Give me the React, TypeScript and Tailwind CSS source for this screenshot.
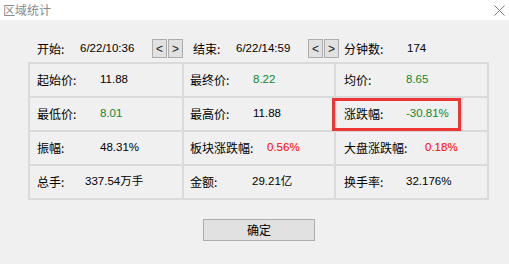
const cjk = "font-['Microsoft_YaHei','Noto_Sans_CJK_SC',sans-serif]";
const num = "font-['Liberation_Sans','Noto_Sans_CJK_SC',sans-serif]";

type Cell = { label: string; value: string; lw: string; color: string };

const rows: Cell[][] = [
  [
    { label: '起始价:', value: '11.88', lw: 'w-[63px]', color: 'text-black' },
    { label: '最终价:', value: '8.22', lw: 'w-[63px]', color: 'text-[#11872d]' },
    { label: '均价:', value: '8.65', lw: 'w-[62px]', color: 'text-[#11872d]' },
  ],
  [
    { label: '最低价:', value: '8.01', lw: 'w-[63px]', color: 'text-[#11872d]' },
    { label: '最高价:', value: '11.88', lw: 'w-[63px]', color: 'text-black' },
    { label: '涨跌幅:', value: '-30.81%', lw: 'w-[62px]', color: 'text-[#11872d]' },
  ],
  [
    { label: '振幅:', value: '48.31%', lw: 'w-[63px]', color: 'text-black' },
    { label: '板块涨跌幅:', value: '0.56%', lw: 'w-[77px]', color: 'text-[#ff0000]' },
    { label: '大盘涨跌幅:', value: '0.18%', lw: 'w-[81px]', color: 'text-[#ff0000]' },
  ],
  [
    { label: '总手:', value: '337.54万手', lw: 'w-[48px]', color: 'text-black' },
    { label: '金额:', value: '29.21亿', lw: 'w-[62px]', color: 'text-black' },
    { label: '换手率:', value: '32.176%', lw: 'w-[62px]', color: 'text-black' },
  ],
];

const pads = ['pl-[7px]', 'pl-[6px]', 'pl-[8px]'];

const ArrowBtn = ({ ch }: { ch: string }) => (
  <button className={`w-[15px] h-[19px] border border-[#adadad] bg-[#e1e1e1] text-[12px] leading-none text-[#222] flex items-center justify-center ${num}`}>
    {ch}
  </button>
);

export default function App() {
  return (
    <div className="w-[509px] h-[264px] bg-[#f0f0f0] flex flex-col text-black">
      <div className="h-[20px] bg-white flex items-center justify-between pl-[3px] pr-[3px]">
        <span className={`text-[12px] text-[#8a8a8a] ${cjk}`}>区域统计</span>
        <svg width="11" height="11" viewBox="0 0 11 11" className="mr-[1px]">
          <path d="M0.5 0.5 L10.5 10.5 M10.5 0.5 L0.5 10.5" stroke="#777" strokeWidth="1" fill="none" />
        </svg>
      </div>

      <div className="flex items-center h-[19px] mt-[19px] pl-[37px] text-[12px]">
        <span className={`w-[43px] ${cjk}`}>开始:</span>
        <span className={`w-[72px] text-[11.5px] ${num}`}>6/22/10:36</span>
        <div className="flex gap-[1px]">
          <ArrowBtn ch="<" />
          <ArrowBtn ch=">" />
        </div>
        <span className={`ml-[10px] w-[43px] ${cjk}`}>结束:</span>
        <span className={`w-[72px] text-[11.5px] ${num}`}>6/22/14:59</span>
        <div className="flex gap-[1px]">
          <ArrowBtn ch="<" />
          <ArrowBtn ch=">" />
        </div>
        <span className={`ml-[5px] w-[63px] ${cjk}`}>分钟数:</span>
        <span className={`text-[11.5px] ${num}`}>174</span>
      </div>

      <div className="relative ml-[28px] mt-[4px] w-[461px]">
        <div className="grid grid-cols-[152px_150px_151px] auto-rows-[32px] gap-[2px] p-[2px] bg-[#dadada]">
          {rows.flatMap((row, r) =>
            row.map((c, i) => (
              <div key={`${r}-${i}`} className={`bg-[#f0f0f0] flex items-center text-[12px] ${pads[i]}`}>
                <span className={`${c.lw} shrink-0 ${cjk}`}>{c.label}</span>
                <span className={`text-[11.5px] ${c.color} ${num}`}>{c.value}</span>
              </div>
            ))
          )}
        </div>
        <div className="absolute left-[304px] top-[36px] w-[129px] h-[33px] border-[3px] border-[#ee3535]" />
      </div>

      <button className={`ml-[203px] mt-[19px] w-[112px] h-[22px] border border-[#adadad] bg-[#e1e1e1] text-[12px] ${cjk}`}>
        确定
      </button>
    </div>
  );
}
